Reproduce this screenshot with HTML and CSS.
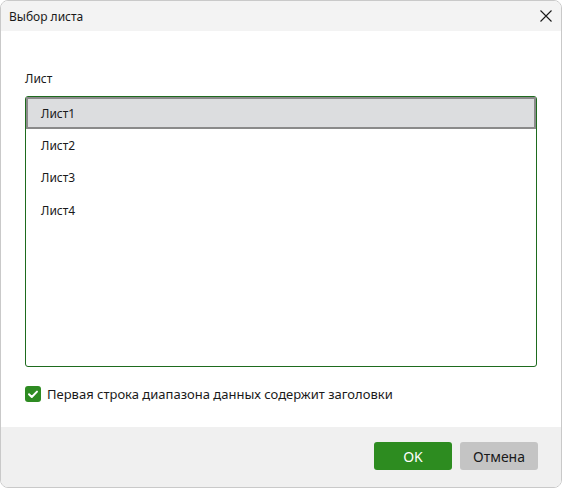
FILE: index.html
```html
<!DOCTYPE html>
<html lang="ru">
<head>
    <meta charset="UTF-8">
    <title>Выбор листа</title>
    <link rel="stylesheet" href="styles.css">
</head>
<body>

    <!-- Dialog window -->
    <div class="dialog">
        <div class="title-bar">
            <span class="title">Выбор листа</span>
            <span class="close">
                <svg width="12" height="12" viewBox="0 0 12 12">
                    <path d="M0.5 0.5 L11.5 11.5 M11.5 0.5 L0.5 11.5" stroke="#1a1a1a" stroke-width="1.1" fill="none"/>
                </svg>
            </span>
        </div>

        <div class="dialog-body">
            <div class="field-label">Лист</div>
            <div class="sheet-list">
                <div class="sheet-item selected">Лист1</div>
                <div class="sheet-item">Лист2</div>
                <div class="sheet-item">Лист3</div>
                <div class="sheet-item">Лист4</div>
            </div>

            <label class="check-row">
                <span class="checkbox">
                    <svg width="16" height="16" viewBox="0 0 16 16">
                        <path d="M4 8.2 L6.8 11 L12 5.6" stroke="#fff" stroke-width="2" fill="none" stroke-linecap="round" stroke-linejoin="round"/>
                    </svg>
                </span>
                <span class="check-text">Первая строка диапазона данных содержит заголовки</span>
            </label>
        </div>

        <div class="dialog-footer">
            <button class="btn btn-ok">OK</button>
            <button class="btn btn-cancel">Отмена</button>
        </div>
    </div>

</body>
</html>
```

FILE: styles.css
```css
/* Reset default styles */
* {
    margin: 0;
    padding: 0;
    box-sizing: border-box;
}

body {
    width: 562px;
    height: 488px;
    background-color: #ffffff;
    font-family: "Noto Sans", "Open Sans", sans-serif;
    color: #1a1a1a;
}

/* Window frame */
.dialog {
    width: 562px;
    height: 488px;
    border: 1px solid #c9c9c9;
    border-radius: 8px;
    overflow: hidden;
    display: flex;
    flex-direction: column;
    background-color: #fff;
}

/* Title bar */
.title-bar {
    height: 30px;
    background-color: #f3f3f3;
    display: flex;
    align-items: center;
    justify-content: space-between;
    padding: 0 9px 0 8px;
}

.title {
    font-size: 12px;
}

.close {
    display: flex;
    width: 12px;
    height: 12px;
}

/* Body */
.dialog-body {
    flex: 1;
    padding: 40px 24px 0 24px;
    display: flex;
    flex-direction: column;
}

.field-label {
    font-size: 12px;
    line-height: 16px;
    margin-bottom: 9px;
}

.sheet-list {
    height: 271px;
    border: 1px solid #1e6b1e;
    border-radius: 3px;
}

.sheet-item {
    height: 32.4px;
    padding-left: 13px;
    display: flex;
    align-items: center;
    font-size: 12px;
    border: 2px solid transparent;
}

.sheet-item.selected {
    background-color: #dcdddf;
    border-color: #8a8a8a;
}

/* Checkbox row */
.check-row {
    margin-top: 18px;
    display: flex;
    align-items: center;
    gap: 6px;
}

.checkbox {
    width: 16px;
    height: 16px;
    border-radius: 3px;
    background-color: #2e8b22;
    display: flex;
}

.check-text {
    font-size: 13px;
}

/* Footer */
.dialog-footer {
    height: 60px;
    background-color: #f0f0f0;
    display: flex;
    justify-content: flex-end;
    align-items: flex-start;
    gap: 8px;
    padding: 15px 23px 0 0;
}

.btn {
    width: 78px;
    height: 28px;
    border: none;
    border-radius: 3px;
    font-family: "Noto Sans", "Open Sans", sans-serif;
    font-size: 14px;
    cursor: pointer;
}

.btn-ok {
    background-color: #2d8c20;
    color: #ffffff;
}

.btn-cancel {
    background-color: #c4c4c4;
    color: #1a1a1a;
}
```
